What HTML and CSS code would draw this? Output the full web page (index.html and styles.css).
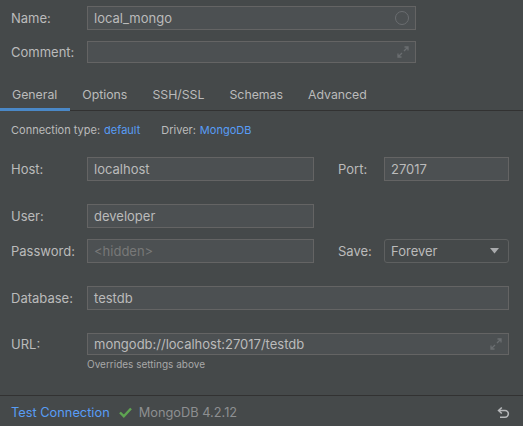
FILE: index.html
```html
<!DOCTYPE html>
<html>
<head>
<meta charset="utf-8">
<link rel="stylesheet" href="styles.css">
</head>
<body>
<div class="dialog">
  <div class="top">
    <div class="row r-name">
      <label class="lbl">Name:</label>
      <div class="field wide-top">
        <span class="val">local_mongo</span>
        <svg class="ico" width="16" height="16" viewBox="0 0 16 16"><circle cx="8" cy="8" r="6.5" fill="none" stroke="#6a6d70" stroke-width="1"/></svg>
      </div>
    </div>
    <div class="row r-comment">
      <label class="lbl">Comment:</label>
      <div class="field wide-top short">
        <span class="val"></span>
        <svg class="ico" width="14" height="14" viewBox="0 0 14 14"><g fill="none" stroke="#6a6d70" stroke-width="1.3"><path d="M8 6 L12 2 M8.5 2 H12 V5.5"/><path d="M6 8 L2 12 M2 8.5 V12 H5.5"/></g></svg>
      </div>
    </div>
  </div>
  <div class="tabs">
    <div class="tab active">General</div>
    <div class="tab">Options</div>
    <div class="tab">SSH/SSL</div>
    <div class="tab">Schemas</div>
    <div class="tab">Advanced</div>
  </div>
  <div class="body">
    <div class="conn">
      <span>Connection type:</span><a class="link">default</a>
      <span class="drv">Driver:</span><a class="link">MongoDB</a>
    </div>
    <div class="row r-host">
      <label class="lbl">Host:</label>
      <div class="field mid"><span class="val">localhost</span></div>
      <label class="lbl2">Port:</label>
      <div class="field small"><span class="val">27017</span></div>
    </div>
    <div class="row r-user">
      <label class="lbl">User:</label>
      <div class="field mid"><span class="val">developer</span></div>
    </div>
    <div class="row r-pass">
      <label class="lbl">Password:</label>
      <div class="field mid"><span class="val ph">&lt;hidden&gt;</span></div>
      <label class="lbl2">Save:</label>
      <div class="field small combo"><span class="val">Forever</span>
        <svg class="tri" width="9" height="6" viewBox="0 0 9 6"><path d="M0 0 H9 L4.5 5.5 Z" fill="#a9abad"/></svg>
      </div>
    </div>
    <div class="row r-db">
      <label class="lbl">Database:</label>
      <div class="field full"><span class="val">testdb</span></div>
    </div>
    <div class="row r-url">
      <label class="lbl">URL:</label>
      <div class="field full short"><span class="val">mongodb://localhost:27017/testdb</span>
        <svg class="ico" width="14" height="14" viewBox="0 0 14 14"><g fill="none" stroke="#6a6d70" stroke-width="1.3"><path d="M8 6 L12 2 M8.5 2 H12 V5.5"/><path d="M6 8 L2 12 M2 8.5 V12 H5.5"/></g></svg>
      </div>
    </div>
    <div class="hint">Overrides settings above</div>
  </div>
  <div class="footer">
    <a class="link test">Test Connection</a>
    <svg class="check" width="13" height="11" viewBox="0 0 13 11"><path d="M1 5.5 L4.8 9.2 L12 1.5" fill="none" stroke="#5fa552" stroke-width="2.4"/></svg>
    <span class="ver">MongoDB 4.2.12</span>
    <span class="spacer"></span>
    <svg class="undo" width="14" height="13" viewBox="0 0 14 13"><g fill="none" stroke="#b6b8ba" stroke-width="1.6"><path d="M3 4.5 H9 A3.3 3.3 0 0 1 9 11.2 H4"/><path d="M5.8 1.5 L2.6 4.5 L5.8 7.5"/></g></svg>
  </div>
</div>
</body>
</html>
```
FILE: styles.css
```css
* { box-sizing: border-box; }
html, body { margin: 0; padding: 0; }
body {
  background: #45494a;
  color: #bbbbbb;
  font-family: Inter, "Liberation Sans", sans-serif;
  font-size: 13px;
  width: 523px;
  height: 426px;
  overflow: hidden;
}
.dialog { display: flex; flex-direction: column; height: 426px; }
.top { padding: 6px 0 0 11px; display: flex; flex-direction: column; gap: 11px; }
.row { display: flex; align-items: center; }
.lbl { width: 76px; flex: none; }
.lbl2 { width: 46px; margin-left: 24px; flex: none; }
.field {
  height: 24px;
  background: #4c5052;
  border: 1px solid #646464;
  display: flex;
  align-items: center;
  padding: 0 5px 0 6px;
  flex: none;
}
.field.short { height: 22px; }
.val { flex: 1; white-space: nowrap; color: #bbbbbb; }
.val.ph { color: #787878; }
.wide-top { width: 329px; }
.mid { width: 227px; }
.small { width: 125px; }
.full { width: 422px; }
.combo { border-radius: 3px; background: #45494a; border-color: #5e6060; padding-right: 9px; }
.ico { flex: none; }
.tabs {
  display: flex;
  margin-top: 17px;
  height: 31px;
  border-bottom: 1px solid #323232;
  font-size: 12.3px;
}
.tab {
  padding: 7px 12.5px 0 12.5px;
  height: 31px;
  margin-bottom: -1px;
  color: #bbbbbb;
}
.tab:first-child { padding-left: 12px; }
.tab.active { border-bottom: 3px solid #4a88c7; }
.body { padding: 12px 14px 0 11px; display: flex; flex-direction: column; }
.conn { font-size: 11px; line-height: 14px; color: #bbbbbb; display: flex; gap: 4px; }
.conn .drv { margin-left: 17px; }
.link { color: #589df6; text-decoration: none; }
.r-host { margin-top: 20px; }
.r-user { margin-top: 23px; }
.r-pass { margin-top: 11px; }
.r-db { margin-top: 23px; }
.r-url { margin-top: 23px; }
.hint { margin: 3px 0 0 76px; font-size: 10px; line-height: 13px; color: #a8a8a8; }
.footer {
  margin-top: auto;
  height: 31px;
  border-top: 1px solid #323232;
  display: flex;
  align-items: center;
  padding: 2px 13px 0 11px;
  font-size: 12.8px;
}
.check { margin-left: 9px; }
.ver { margin-left: 7px; color: #8d8f91; }
.spacer { flex: 1; }
```
